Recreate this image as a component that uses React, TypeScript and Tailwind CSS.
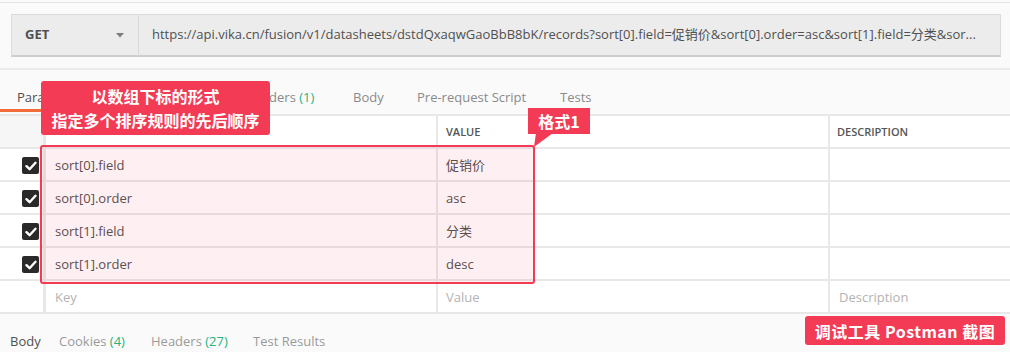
import React from "react";

const FONT = "font-['Open_Sans','Noto_Sans_CJK_SC',sans-serif]";
const CJK = "font-['Noto_Sans_CJK_SC','Open_Sans',sans-serif]";

function Check() {
  return (
    <div className="w-[17px] h-[17px] rounded-[2px] bg-[#2a2a2a] flex items-center justify-center">
      <svg width="12" height="10" viewBox="0 0 12 10">
        <path d="M1.5 5.2 L4.6 8.2 L10.5 1.8" fill="none" stroke="#ffffff" strokeWidth="2.4" strokeLinecap="round" strokeLinejoin="round" />
      </svg>
    </div>
  );
}

const rows = [
  { k: "sort[0].field", v: "促销价" },
  { k: "sort[0].order", v: "asc" },
  { k: "sort[1].field", v: "分类" },
  { k: "sort[1].order", v: "desc" },
];

export default function App() {
  return (
    <div className={`w-[1010px] h-[352px] relative overflow-hidden bg-[#fafafa] ${FONT}`}>
      <div className="h-[2px]" />
      <div className="h-px bg-[#e6e6e6]" />
      {/* URL bar */}
      <div className="ml-[11px] mr-[9px] mt-[11px] h-[43px] flex">
        <div className="w-[128px] h-full bg-[#ececec] border border-[#dadada] border-b-2 border-b-[#cdcdcd] flex items-center justify-between pl-[13px] pr-[14px]">
          <span className="text-[13px] font-bold text-[#505050]">GET</span>
          <svg width="8" height="5" viewBox="0 0 8 5">
            <path d="M0 0 H8 L4 4.5 Z" fill="#7c7c7c" />
          </svg>
        </div>
        <div className="flex-1 min-w-0 h-full bg-[#ececec] border border-l-0 border-[#dadada] border-b-2 border-b-[#cdcdcd] flex items-center pl-[13px] pr-[8px]">
          <span className="text-[13px] text-[#505050] whitespace-nowrap overflow-hidden">
            https://api.vika.cn/fusion/v1/datasheets/dstdQxaqwGaoBbB8bK/records?sort[0].field=促销价&amp;sort[0].order=asc&amp;sort[1].field=分类&amp;sor...
          </span>
        </div>
      </div>
      <div className="mt-[11px] h-[2px] bg-[#ebebeb]" />
      {/* Tabs */}
      <div className="h-[44px] flex text-[13px] leading-[18px] text-[#8a8a8a]">
        <div className="w-[90px] h-[42px] border-b-[3px] border-[#f26b3a] pl-[17px] pt-[18px] text-[#505050]">Params</div>
        <div className="w-[138px] pl-[17px] pt-[18px]">Authorization</div>
        <div className="w-[108px] pl-[17px] pt-[18px] whitespace-nowrap">
          Headers <span className="text-[#26b47f]">(1)</span>
        </div>
        <div className="w-[64px] pl-[17px] pt-[18px]">Body</div>
        <div className="w-[143px] pl-[17px] pt-[18px] whitespace-nowrap">Pre-request Script</div>
        <div className="pl-[17px] pt-[18px]">Tests</div>
      </div>
      {/* Table */}
      <div className="border-t-2 border-[#e8e8e8] bg-white text-[13px] text-[#505050]">
        <div className="grid grid-cols-[46px_392px_392px_1fr] h-[33px] border-b-2 border-[#e8e8e8] text-[11px] font-semibold text-[#555555]">
          <div className="border-r-[3px] border-[#e8e8e8] bg-[#f6f6f6]" />
          <div className="border-r-2 border-[#e8e8e8] pl-[9px] flex items-center">KEY</div>
          <div className="border-r-2 border-[#e8e8e8] pl-[8px] pt-[2px] flex items-center">VALUE</div>
          <div className="pl-[7px] pt-[2px] flex items-center">DESCRIPTION</div>
        </div>
        {rows.map((r) => (
          <div key={r.k} className="grid grid-cols-[46px_392px_392px_1fr] h-[33px] border-b-2 border-[#e8e8e8]">
            <div className="border-r-[3px] border-[#e8e8e8] flex items-center pl-[22px] pt-[2px]">
              <Check />
            </div>
            <div className="border-r-2 border-[#e8e8e8] pl-[9px] pt-[3px] flex items-center">{r.k}</div>
            <div className="border-r-2 border-[#e8e8e8] pl-[8px] pt-[3px] flex items-center">{r.v}</div>
            <div />
          </div>
        ))}
        <div className="grid grid-cols-[46px_392px_392px_1fr] h-[33px] border-b-2 border-[#e8e8e8] text-[#b3b3b3]">
          <div className="border-r-[3px] border-[#e8e8e8]" />
          <div className="border-r-2 border-[#e8e8e8] pl-[9px] pt-[3px] flex items-center">Key</div>
          <div className="border-r-2 border-[#e8e8e8] pl-[8px] pt-[3px] flex items-center">Value</div>
          <div className="pl-[9px] pt-[3px] flex items-center">Description</div>
        </div>
      </div>
      {/* Bottom tabs */}
      <div className="flex pl-[10px] pt-[18px] text-[13px] leading-[18px] text-[#9a9a9a]">
        <div className="w-[49px] text-[#505050]">Body</div>
        <div className="w-[92px] whitespace-nowrap">
          Cookies <span className="text-[#26b47f]">(4)</span>
        </div>
        <div className="w-[102px] whitespace-nowrap">
          Headers <span className="text-[#26b47f]">(27)</span>
        </div>
        <div className="whitespace-nowrap">Test Results</div>
      </div>

      {/* Highlight box */}
      <div className="absolute left-[40px] top-[145px] w-[495px] h-[139px] border-2 border-[#f23b55] rounded-[3px] bg-[rgba(243,59,85,0.08)]" />

      {/* Callout 1 */}
      <div className={`absolute left-[41px] top-[81px] w-[229px] h-[54px] bg-[#f33b55] rounded-[3px] flex flex-col items-center justify-center text-white font-bold text-[16px] leading-[24px] ${CJK}`}>
        <div>以数组下标的形式</div>
        <div>指定多个排序规则的先后顺序</div>
      </div>

      {/* Callout 2 */}
      <div className={`absolute left-[528px] top-[108px] w-[62px] h-[26px] bg-[#f33b55] flex items-center justify-center text-white font-bold text-[16px] ${CJK}`}>
        格式1
      </div>
      <svg className="absolute left-[533px] top-[133px]" width="22" height="15" viewBox="0 0 22 15">
        <polygon points="3,0 20,0 1,14" fill="#f33b55" />
      </svg>

      {/* Badge */}
      <div className={`absolute left-[805px] top-[316px] w-[200px] h-[29px] bg-[#f33b55] rounded-[3px] flex items-center justify-center text-white font-bold text-[16px] tracking-[0.5px] ${CJK}`}>
        调试工具 Postman 截图
      </div>
    </div>
  );
}
